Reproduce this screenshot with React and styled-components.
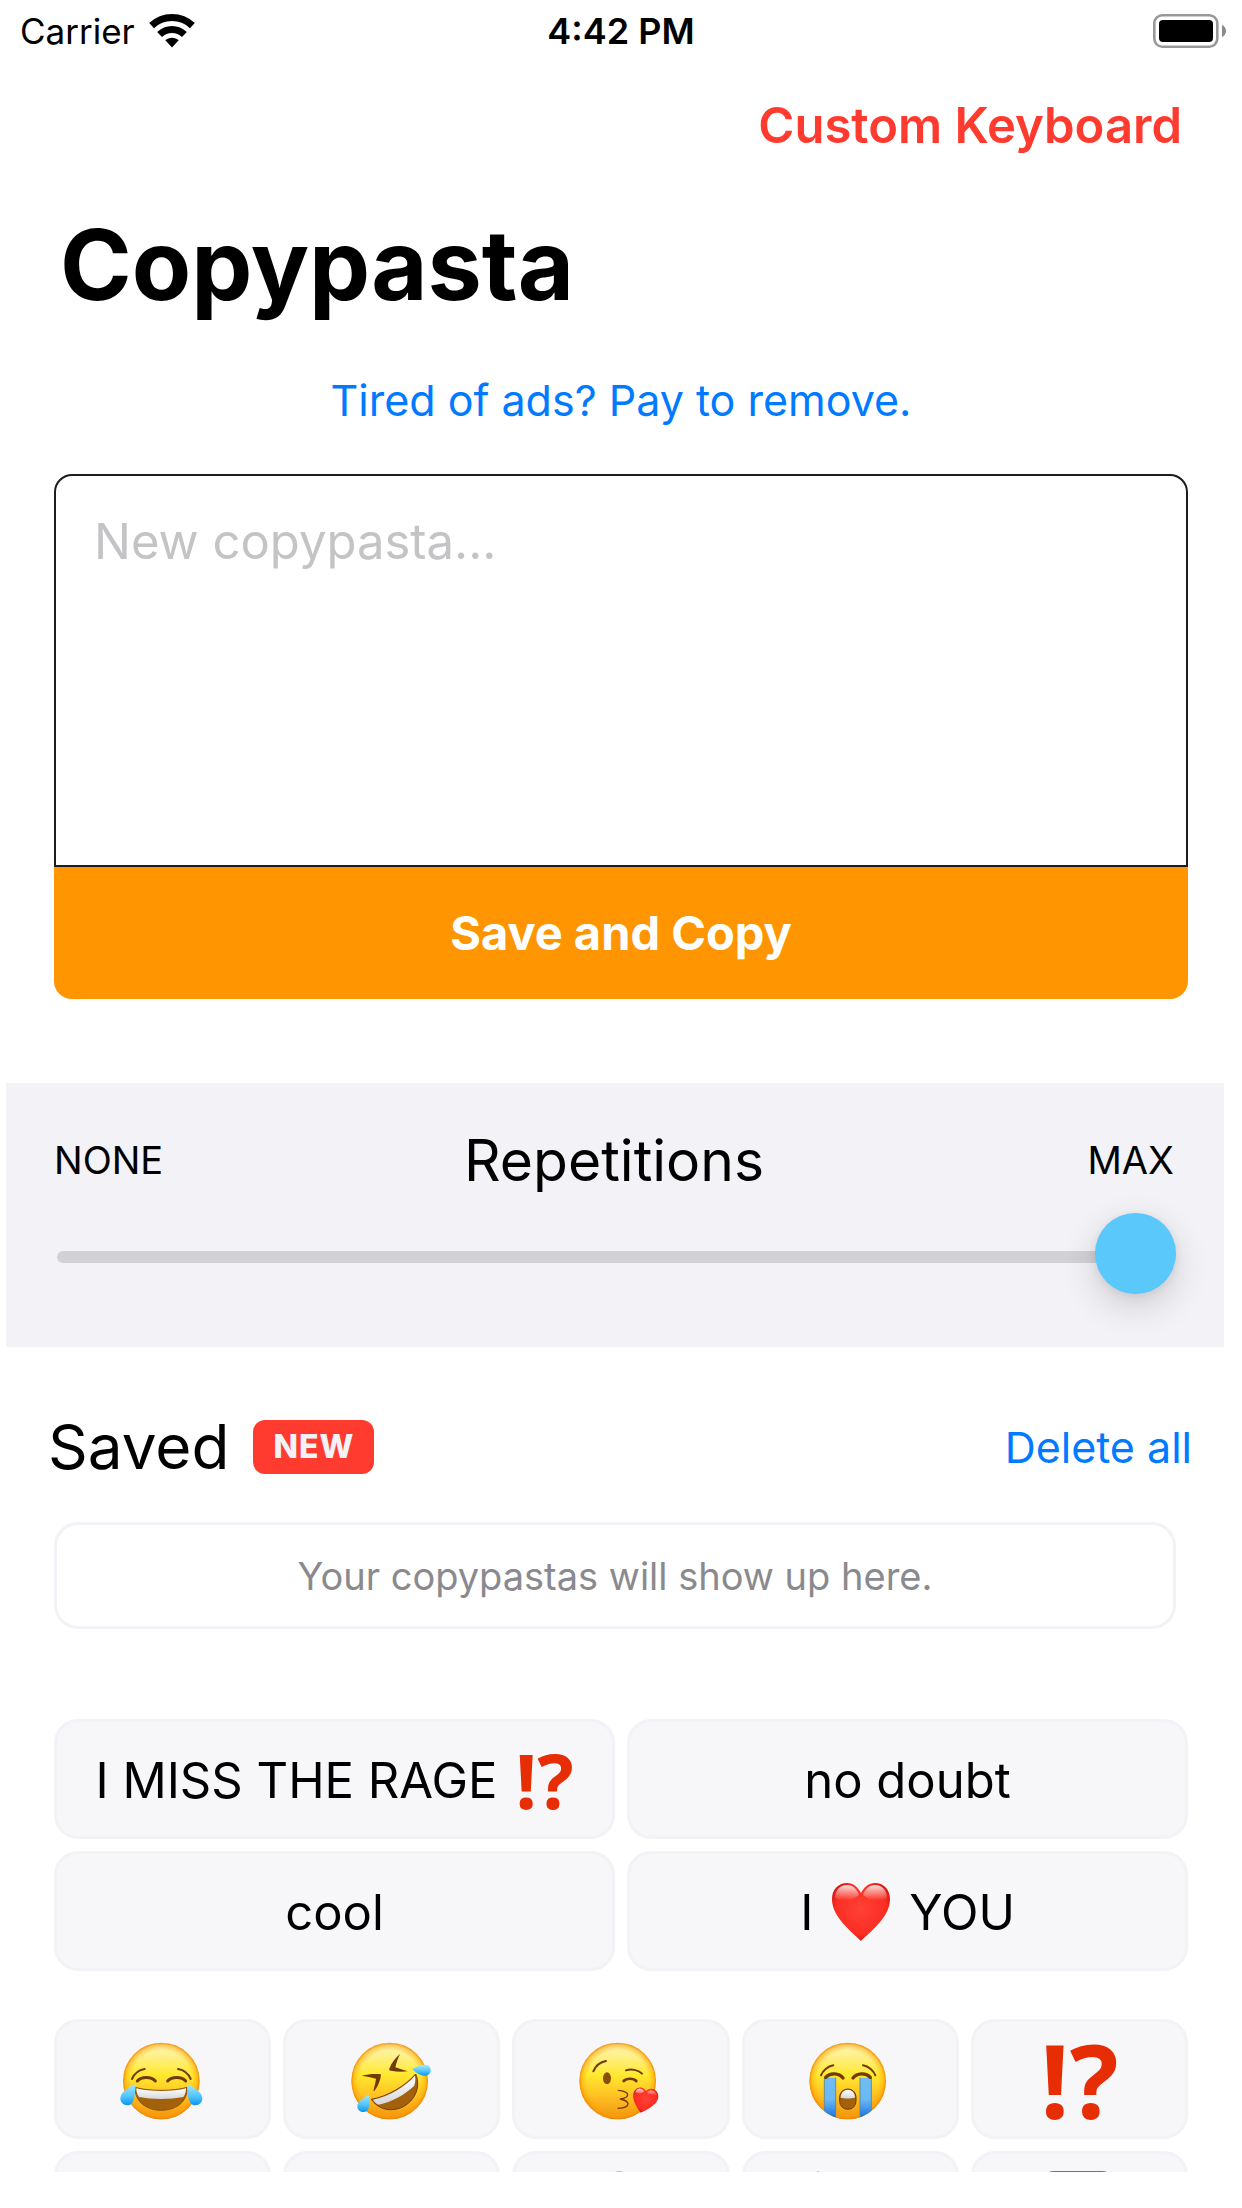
import React, { useState } from "react";
import styled, { createGlobalStyle } from "styled-components";

const GlobalStyle = createGlobalStyle`
  *, *::before, *::after { box-sizing: border-box; }
  body {
    margin: 0;
    background: #fff;
    color: #000;
    font-family: Inter, "Liberation Sans", sans-serif;
  }
  button, textarea, input { font: inherit; color: inherit; }
`;

const Screen = styled.div`
  display: flex;
  flex-direction: column;
  height: 100vh;
  padding-bottom: 36px;
  overflow: hidden;
`;

const StatusBar = styled.header`
  display: grid;
  grid-template-columns: 1fr auto 1fr;
  align-items: center;
  flex: none;
  height: 62px;
  padding: 0 16px;
  font-size: 35px;
  line-height: 44px;
`;

const Carrier = styled.div`
  display: flex;
  align-items: center;
  gap: 14px;
  padding-left: 4px;
`;

const Clock = styled.time`
  font-size: 36px;
  font-weight: 600;
`;

const BatteryIcon = styled.svg`
  justify-self: end;
`;

const Content = styled.main`
  flex: 1;
  min-height: 0;
  overflow: hidden;
`;

const NavBar = styled.nav`
  display: flex;
  align-items: center;
  justify-content: flex-end;
  height: 128px;
  padding: 0 60px;
`;

const TextButton = styled.button`
  padding: 0;
  border: 0;
  background: none;
  color: ${(p) => (p.$strong ? "#ff3b30" : "#007aff")};
  font-size: ${(p) => (p.$strong ? "49px" : "43px")};
  font-weight: ${(p) => (p.$strong ? 600 : 400)};
  line-height: 60px;
  cursor: pointer;
`;

const Title = styled.h1`
  margin: 0;
  padding: 0 60px;
  font-size: 97px;
  font-weight: 700;
  line-height: 150px;
`;

const AdNotice = styled.div`
  display: flex;
  align-items: center;
  justify-content: center;
  height: 120px;
`;

const Composer = styled.form`
  display: flex;
  flex-direction: column;
  margin: 14px 54px 84px;
`;

const Field = styled.textarea`
  display: block;
  width: 100%;
  height: 393px;
  padding: 36px 38px;
  border: 2px solid #1c1c1e;
  border-radius: 18px 18px 0 0;
  outline: none;
  background: #fff;
  resize: none;
  font-size: 49px;
  line-height: 60px;

  &::placeholder { color: #c4c4c6; opacity: 1; }
`;

const SaveButton = styled.button`
  height: 132px;
  padding: 0 0 2px;
  border: 0;
  border-radius: 0 0 18px 18px;
  background: #ff9500;
  color: #fff;
  font-size: 47px;
  font-weight: 700;
  cursor: pointer;
`;

const SliderPanel = styled.section`
  margin: 0 18px 0 6px;
  padding: 36px 48px 34px;
  background: #f2f2f7;
`;

const SliderHeader = styled.div`
  display: grid;
  grid-template-columns: 1fr auto 1fr;
  align-items: center;
  height: 82px;
  padding: 0 2px 0 0;
`;

const SliderEnd = styled.span`
  font-size: 38px;
  text-align: ${(p) => p.$side};
`;

const SliderLabel = styled.label`
  font-size: 57px;
`;

const Slider = styled.input`
  display: block;
  width: calc(100% - 3px);
  height: 112px;
  margin: 0 0 0 3px;
  appearance: none;
  background: none;
  cursor: pointer;

  &::-webkit-slider-runnable-track {
    height: 12px;
    border-radius: 6px;
    background: #d1d1d6;
  }

  &::-webkit-slider-thumb {
    appearance: none;
    width: 81px;
    height: 81px;
    margin-top: -38px;
    border-radius: 50%;
    background: #5ac8fa;
    box-shadow: 0 12px 36px rgba(0, 0, 0, 0.16), 0 2px 8px rgba(0, 0, 0, 0.08);
  }
`;

const SavedHeader = styled.div`
  display: flex;
  align-items: center;
  height: 150px;
  margin-top: 25px;
  padding: 0 50px 0 48px;
`;

const SavedTitle = styled.h2`
  margin: 0 24px 0 0;
  font-size: 62px;
  font-weight: 400;
  line-height: 78px;
`;

const Badge = styled.span`
  margin-right: auto;
  padding: 0 20px;
  border-radius: 12px;
  background: #ff3b30;
  color: #f2f2f7;
  font-size: 32px;
  font-weight: 800;
  letter-spacing: 1px;
  line-height: 54px;
`;

const EmptyCard = styled.p`
  display: flex;
  align-items: center;
  justify-content: center;
  height: 107px;
  margin: 0 66px 90px 54px;
  border: 3px solid #f2f2f7;
  border-radius: 24px;
  color: #8a8a8e;
  font-size: 38px;
`;

const TileGrid = styled.div`
  display: grid;
  grid-template-columns: repeat(${(p) => p.$columns}, 1fr);
  gap: 12px;
  margin: 0 54px 48px;
`;

const Tile = styled.button`
  display: flex;
  align-items: center;
  justify-content: center;
  gap: 18px;
  height: 120px;
  padding: 2px 0 0;
  border: 3px solid #f2f2f7;
  border-radius: 24px;
  background: #f7f7f9;
  font-size: 49px;
  cursor: pointer;
`;

const Interrobang = styled.span`
  color: #e72d04;
  font-family: "Noto Sans", "Open Sans", sans-serif;
  font-size: ${(p) => p.$size}px;
  font-weight: 700;
  line-height: 1;
`;

function Wifi() {
  return (
    <svg width="46" height="34" viewBox="0 0 46 34" aria-hidden="true">
      <g fill="none" stroke="#000" strokeWidth="7">
        <path d="M2.6 11.6C14 .8 32 .8 43.4 11.6" />
        <path d="M10.6 20.6c7-6.8 17.800-6.800 24.800 0" />
      </g>
      <path d="M23 33.500l-6.700-7.300c3.800-3.400 9.600-3.400 13.400 0z" />
    </svg>
  );
}

function Battery() {
  return (
    <BatteryIcon width="73" height="34" viewBox="0 0 73 34" role="img" aria-label="Battery full">
      <rect x="1.300" y="1.300" width="63" height="31.400" rx="8" fill="none" stroke="#999" strokeWidth="2.600" />
      <rect x="6" y="6" width="54" height="22" rx="4" />
      <path d="M69 11c2.600 1.200 4 3.400 4 6s-1.400 4.800-4 6z" fill="#8a8a8a" />
    </BatteryIcon>
  );
}

const HiddenSvg = styled.svg`
  position: absolute;
`;

function Defs() {
  return (
    <HiddenSvg width="0" height="0" aria-hidden="true">
      <defs>
        <linearGradient id="skin" x1="0" y1="0" x2="0" y2="1">
          <stop offset="0" stopColor="#fff6b8" />
          <stop offset=".18" stopColor="#fff088" />
          <stop offset=".42" stopColor="#ffe92f" />
          <stop offset=".7" stopColor="#ffc022" />
          <stop offset="1" stopColor="#f0930f" />
        </linearGradient>
        <radialGradient id="rim">
          <stop offset=".8" stopColor="#ff9c00" stopOpacity="0" />
          <stop offset=".93" stopColor="#ff9c00" stopOpacity=".45" />
          <stop offset="1" stopColor="#ea8205" stopOpacity=".9" />
        </radialGradient>
        <linearGradient id="tear" x1="0" y1="0" x2="0" y2="1">
          <stop offset="0" stopColor="#a9e6fb" />
          <stop offset=".6" stopColor="#4cc4fb" />
          <stop offset="1" stopColor="#0b93ec" />
        </linearGradient>
        <linearGradient id="stream" x1="0" y1="0" x2="0" y2="1">
          <stop offset="0" stopColor="#6fbcf2" />
          <stop offset=".5" stopColor="#6ab9f3" />
          <stop offset="1" stopColor="#0a66dc" />
        </linearGradient>
        <linearGradient id="teeth" x1="0" y1="0" x2="0" y2="1">
          <stop offset="0" stopColor="#fff" />
          <stop offset="1" stopColor="#d5d6da" />
        </linearGradient>
        <radialGradient id="heart" cx=".5" cy=".45" r=".62">
          <stop offset="0" stopColor="#ff4136" />
          <stop offset=".7" stopColor="#fb2d22" />
          <stop offset="1" stopColor="#c40c06" />
        </radialGradient>
        <linearGradient id="gloss" x1="0" y1="0" x2="0" y2="1">
          <stop offset="0" stopColor="#fff" stopOpacity=".85" />
          <stop offset="1" stopColor="#fff" stopOpacity="0" />
        </linearGradient>
      </defs>
    </HiddenSvg>
  );
}

function Emoji({ viewBox, children }) {
  return (
    <svg width="90" height="90" viewBox={viewBox} aria-hidden="true">
      {children}
    </svg>
  );
}

function Face({ cx, cy }) {
  return (
    <>
      <circle cx={cx} cy={cy} r="115" fill="url(#skin)" />
      <circle cx={cx} cy={cy} r="115" fill="url(#rim)" />
    </>
  );
}

function Joy() {
  return (
    <Emoji viewBox="352 132 270 270">
      <Face cx={482} cy={270} />
      <g fill="none" stroke="#713a05" strokeLinecap="round">
        <path d="M394 264c6-14 20-27 38-30M570 264c-6-14-20-27-38-30" strokeWidth="6" />
        <path d="M410 270c12-14 42-14 54 0M501 270c12-14 42-14 54 0" strokeWidth="9" />
      </g>
      <path d="M404 289c40 12 115 12 155 0 4 40-30 69-77 69s-82-29-78-69z" fill="#a2610a" stroke="#713a05" strokeWidth="2" />
      <path d="M407 292c40 11 109 11 149 0 0 12-3 20-8 26-40 8-93 8-133 0-5-6-8-14-8-26z" fill="url(#teeth)" />
      <path d="M405 279c-18 9-46 24-46 43 0 12 9 21 21 21 21 0 23-30 25-64z" fill="url(#tear)" />
      <path d="M559 279c18 9 46 24 46 43 0 12-9 21-21 21-21 0-23-30-25-64z" fill="url(#tear)" />
    </Emoji>
  );
}

function Rofl() {
  return (
    <Emoji viewBox="14 0 270 270">
      <Face cx={142} cy={138} />
      <path d="M58 122c20-5 42-6 58-4-1 18-9 36-20 50-2 0-3-2-2-4 3-12 6-23 7-33-14-4-28-7-43-9z" fill="#713a05" />
      <path d="M173 57c-14 12-26 27-32 44-1 4 1 6 5 6 16 3 32 4 50 2-14-4-24-8-37-12 3-14 8-27 14-40z" fill="#713a05" />
      <path d="M87 193c48-8 103-41 133-76 18 42-6 88-49 103-34 11-65 0-84-27z" fill="#a2610a" stroke="#713a05" strokeWidth="3" />
      <path d="M92 194c46-9 98-40 126-72 2 12 1 22-3 31-28 27-68 48-106 56-7-3-13-8-17-15z" fill="url(#teeth)" />
      <path d="M80 179c-15 8-34 19-35 34 0 11 8 19 19 18 18-1 19-24 16-52z" fill="url(#tear)" />
      <path d="M210 103c13-9 27-15 42-13 9 1 14 8 13 17-1 10-9 15-19 15-13 0-25-9-36-19z" fill="url(#tear)" />
    </Emoji>
  );
}

function Kiss() {
  return (
    <Emoji viewBox="467 132 270 270">
      <Face cx={592} cy={270} />
      <g fill="none" stroke="#713a05" strokeLinecap="round" strokeLinejoin="round">
        <path d="M519 241c6-14 20-28 38-31" strokeWidth="6" />
        <path d="M617 238c15-5 36-2 48 10" strokeWidth="6" />
        <path d="M610 270c8-9 30-9 38 0" strokeWidth="8" />
        <path d="M594 298c16 1 28 7 28 13 0 7-11 11-22 13 12 3 23 7 23 14 0 8-14 13-30 14" strokeWidth="4" />
      </g>
      <ellipse cx="560" cy="262" rx="12" ry="18" fill="#8a4d08" />
      <path d="M661 365c-12-16-25-37-22-56 3-18 25-29 38-9 15-14 37-4 37 17 0 21-29 37-53 48z" fill="url(#heart)" />
      <path d="M645 304c5-16 20-14 27-3-7 8-18 8-27 3zM680 304c8-10 26-7 29 8-11 2-21 0-29-8z" fill="url(#gloss)" />
    </Emoji>
  );
}

function Sob() {
  return (
    <Emoji viewBox="17 0 270 270">
      <clipPath id="sobFace"><circle cx="145" cy="138" r="115" /></clipPath>
      <Face cx={145} cy={138} />
      <g clipPath="url(#sobFace)">
        <path d="M75 128h34v130H75zM182 128h34v130h-34z" fill="url(#stream)" />
        <path d="M75 128v130M109 128v130M182 128v130M216 128v130" stroke="#55809a" strokeWidth="2.500" />
      </g>
      <g fill="none" stroke="#713a05" strokeLinecap="round">
        <path d="M65 121c5-14 20-27 37-30M228 121c-5-14-20-27-37-30" strokeWidth="6" />
        <path d="M79 127c14-15 40-13 52 2M161 129c12-15 38-17 52-2" strokeWidth="10" />
      </g>
      <rect x="121" y="162" width="49" height="61" rx="24" fill="#a2610a" stroke="#713a05" strokeWidth="3" />
      <path d="M124 188c0-32 43-32 43 0-12 3-31 3-43 0z" fill="url(#teeth)" />
    </Emoji>
  );
}

function ThumbsUp() {
  return (
    <Emoji viewBox="0 0 90 90">
      <path d="M43 4c12 0 9 14 9 28h20c8 0 8 10 4 14 4 4 3 11-2 13 2 5 0 10-5 12 1 6-3 10-9 10H34c-8 0-14-6-14-14V50c10-8 16-22 16-38 0-4 2-8 7-8z" fill="#ffb914" />
    </Emoji>
  );
}

function Antenna() {
  return (
    <Emoji viewBox="0 0 90 90">
      <path d="M11 7l2-3 2 3 6 34-8 2z" fill="#6b6c70" />
      <path d="M23 5h2l4 38-6 1z" fill="#b4b5b8" />
      <rect x="14" y="40" width="62" height="42" rx="12" fill="#8e8f94" />
    </Emoji>
  );
}

function SquareSign() {
  return (
    <Emoji viewBox="0 0 90 90">
      <rect x="6" y="4" width="76" height="80" rx="14" fill="#587a95" />
    </Emoji>
  );
}

function Heart() {
  return (
    <svg width="60" height="60" viewBox="0 0 60 60" aria-hidden="true">
      <path d="M30 59C20 49 1 35 1 17 1 7 8 1 16 1c6 0 11 4 14 10C33 5 38 1 44 1c8 0 15 6 15 16 0 18-19 32-29 42z" fill="url(#heart)" />
      <path d="M4 16C4 7 10 3 16 3c6 0 10 4 12 10-6 6-18 7-24 3zM56 16c0-9-6-13-12-13-6 0-10 4-12 10 6 6 18 7 24 3z" fill="url(#gloss)" />
    </svg>
  );
}

export default function App() {
  const [text, setText] = useState("");
  const [repetitions, setRepetitions] = useState(100);

  return (
    <Screen>
      <GlobalStyle />
      <Defs />
      <StatusBar>
        <Carrier>
          Carrier
          <Wifi />
        </Carrier>
        <Clock>4:42 PM</Clock>
        <Battery />
      </StatusBar>

      <Content>
        <NavBar>
          <TextButton type="button" $strong>Custom Keyboard</TextButton>
        </NavBar>
        <Title>Copypasta</Title>
        <AdNotice>
          <TextButton type="button">Tired of ads? Pay to remove.</TextButton>
        </AdNotice>

        <Composer onSubmit={(e) => e.preventDefault()}>
          <Field
            aria-label="New copypasta"
            placeholder="New copypasta..."
            value={text}
            onChange={(e) => setText(e.target.value)}
          />
          <SaveButton type="submit">Save and Copy</SaveButton>
        </Composer>

        <SliderPanel>
          <SliderHeader>
            <SliderEnd $side="left">NONE</SliderEnd>
            <SliderLabel htmlFor="repetitions">Repetitions</SliderLabel>
            <SliderEnd $side="right">MAX</SliderEnd>
          </SliderHeader>
          <Slider
            id="repetitions"
            type="range"
            min="0"
            max="100"
            value={repetitions}
            onChange={(e) => setRepetitions(Number(e.target.value))}
          />
        </SliderPanel>

        <SavedHeader>
          <SavedTitle>Saved</SavedTitle>
          <Badge>NEW</Badge>
          <TextButton type="button">Delete all</TextButton>
        </SavedHeader>
        <EmptyCard>Your copypastas will show up here.</EmptyCard>

        <TileGrid $columns={2}>
          <Tile type="button">
            I MISS THE RAGE <Interrobang $size={76}>⁉</Interrobang>
          </Tile>
          <Tile type="button">no doubt</Tile>
          <Tile type="button">cool</Tile>
          <Tile type="button">I <Heart /> YOU</Tile>
        </TileGrid>

        <TileGrid $columns={5}>
          <Tile type="button" aria-label="Tears of joy"><Joy /></Tile>
          <Tile type="button" aria-label="Rolling on the floor laughing"><Rofl /></Tile>
          <Tile type="button" aria-label="Blowing a kiss"><Kiss /></Tile>
          <Tile type="button" aria-label="Loudly crying"><Sob /></Tile>
          <Tile type="button"><Interrobang $size={102}>⁉</Interrobang></Tile>
          <Tile type="button" aria-label="Emoji" />
          <Tile type="button" aria-label="Emoji" />
          <Tile type="button" aria-label="Thumbs up"><ThumbsUp /></Tile>
          <Tile type="button" aria-label="Antenna"><Antenna /></Tile>
          <Tile type="button" aria-label="Square sign"><SquareSign /></Tile>
        </TileGrid>
      </Content>
    </Screen>
  );
}
